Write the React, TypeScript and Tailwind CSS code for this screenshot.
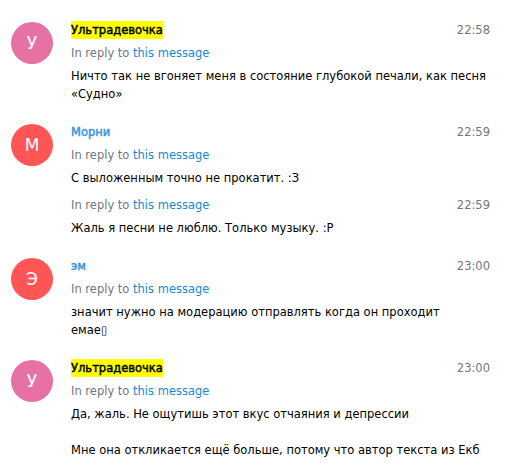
import React from 'react';

type Message = {
  id: number;
  initials?: string;
  avatar?: string;
  name?: string;
  highlight?: boolean;
  time: string;
  joined?: boolean;
  lines: React.ReactNode[];
};

const messages: Message[] = [
  {
    id: 1,
    initials: 'У',
    avatar: 'bg-[#e671a5]',
    name: 'Ультрадевочка',
    highlight: true,
    time: '22:58',
    lines: ['Ничто так не вгоняет меня в состояние глубокой печали, как песня «Судно»'],
  },
  {
    id: 2,
    initials: 'М',
    avatar: 'bg-[#ff5555]',
    name: 'Морни',
    time: '22:59',
    lines: ['С выложенным точно не прокатит. :З'],
  },
  {
    id: 3,
    joined: true,
    time: '22:59',
    lines: ['Жаль я песни не люблю. Только музыку. :P'],
  },
  {
    id: 4,
    initials: 'Э',
    avatar: 'bg-[#ff5555]',
    name: 'эм',
    time: '23:00',
    lines: [
      <>
        значит нужно на модерацию отправлять когда он проходит
        <br />
        емае{'\u25AF'}
      </>,
    ],
  },
  {
    id: 5,
    initials: 'У',
    avatar: 'bg-[#e671a5]',
    name: 'Ультрадевочка',
    highlight: true,
    time: '23:00',
    lines: [
      'Да, жаль. Не ощутишь этот вкус отчаяния и депрессии',
      '',
      'Мне она откликается ещё больше, потому что автор текста из Екб',
    ],
  },
];

function ReplyTo() {
  return (
    <span className="text-[#70777b]">
      In reply to <span className="text-[#168acd]">this message</span>
    </span>
  );
}

export default function App() {
  return (
    <main
      className="min-h-screen bg-white pt-[5px] text-[11.5px] leading-[18px] text-black"
      style={{ fontFamily: '"DejaVu Sans", Verdana, sans-serif' }}
    >
      {messages.map((m) => (
        <div key={m.id} className={`flex pl-[11px] pr-[33px] ${m.joined ? 'pt-[9px]' : 'pt-5 first:pt-4'}`}>
          {m.joined ? (
            <div className="w-[42px] shrink-0" />
          ) : (
            <div
              className={`mt-[1px] flex h-[42px] w-[42px] shrink-0 items-center justify-center rounded-full text-[17px] text-white ${m.avatar}`}
            >
              {m.initials}
            </div>
          )}
          <div className="ml-[18px] min-w-0 flex-1">
            <div className="flex items-start justify-between pb-[5px]">
              {m.joined ? (
                <ReplyTo />
              ) : m.highlight ? (
                <span className="bg-[#ffff00] [-webkit-text-stroke:0.45px]">{m.name}</span>
              ) : (
                <span className="text-[#3892db] [-webkit-text-stroke:0.45px]">{m.name}</span>
              )}
              <span className="text-[#70777b]">{m.time}</span>
            </div>
            {!m.joined && (
              <div className="pb-[5px]">
                <ReplyTo />
              </div>
            )}
            <div className="break-words">
              {m.lines.map((l, i) => (
                <div key={i}>{l || '\u00A0'}</div>
              ))}
            </div>
          </div>
        </div>
      ))}
    </main>
  );
}
